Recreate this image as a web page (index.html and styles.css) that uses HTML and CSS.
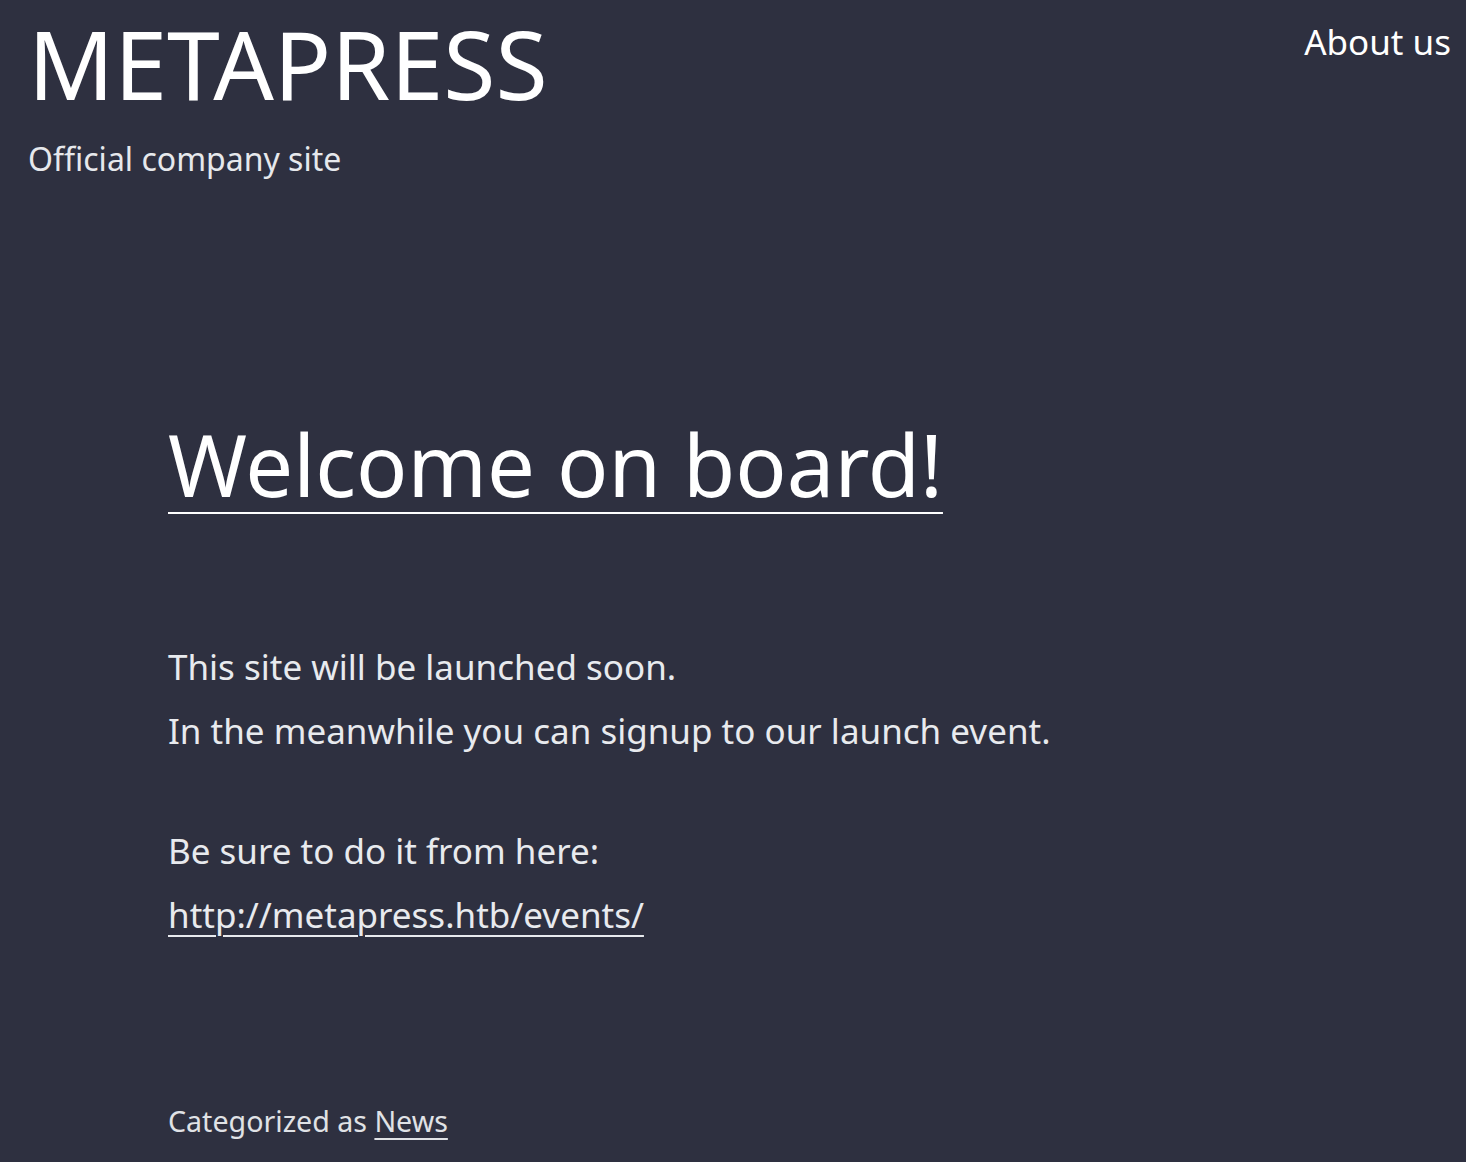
FILE: index.html
```html
<!DOCTYPE html>
<html lang="en">
<head>
<meta charset="utf-8">
<title>METAPRESS – Official company site</title>
<link rel="stylesheet" href="styles.css">
</head>
<body>
<header class="site-header">
  <div class="branding">
    <h1 class="site-title">METAPRESS</h1>
    <p class="site-tagline">Official company site</p>
  </div>
  <nav class="primary-nav">
    <a class="nav-link" href="#">About us</a>
  </nav>
</header>
<main class="site-main">
  <article class="entry">
    <h2 class="entry-title"><a class="entry-title-link" href="#">Welcome on board!</a></h2>
    <div class="entry-content">
      <p class="para">This site will be launched soon.<br>In the meanwhile you can signup to our launch event.</p>
      <p class="para">Be sure to do it from here:<br><a class="content-link" href="#">http://metapress.htb/events/</a></p>
    </div>
    <footer class="entry-footer">
      <span class="cat-links">Categorized as <a class="cat-link" href="#">News</a></span>
    </footer>
  </article>
</main>
</body>
</html>
```

FILE: styles.css
```css
html, body {
  margin: 0;
  padding: 0;
}
body {
  background: #2e3040;
  color: #eceff1;
  font-family: "Noto Sans", "Open Sans", sans-serif;
  height: 1162px;
  overflow: hidden;
}
a {
  color: inherit;
}
.site-header {
  display: flex;
  justify-content: space-between;
  align-items: flex-start;
  padding: 0 15px 0 28px;
}
.site-title {
  margin: 11px 0 0 0;
  font-size: 95px;
  font-weight: 400;
  line-height: 1.1;
  color: #ffffff;
  letter-spacing: 0;
}
.site-tagline {
  margin: 24px 0 0 0;
  font-size: 32px;
  line-height: 1.2;
  color: #e6e8ec;
}
.primary-nav {
  padding-top: 21px;
}
.nav-link {
  display: block;
  font-size: 35px;
  text-decoration: none;
  color: #ffffff;
  line-height: 1.2;
}
.site-main {
  padding: 0 0 0 168px;
}
.entry-title {
  margin: 238px 0 0 0;
  font-size: 85px;
  font-weight: 400;
  line-height: 1.15;
}
.entry-title-link {
  color: #ffffff;
  text-decoration-thickness: 2px;
  text-underline-offset: 15px;
}
.entry-content {
  margin-top: 121px;
}
.para {
  margin: 0 0 56px 0;
  font-size: 35px;
  line-height: 64px;
  color: #e8eaee;
}
.content-link {
  text-decoration-thickness: 2px;
  text-underline-offset: 7px;
}
.entry-footer {
  margin-top: 154px;
  font-size: 28.6px;
  line-height: 1.4;
  color: #e0e2e6;
}
.cat-link {
  text-decoration-thickness: 2px;
  text-underline-offset: 6px;
}
```
